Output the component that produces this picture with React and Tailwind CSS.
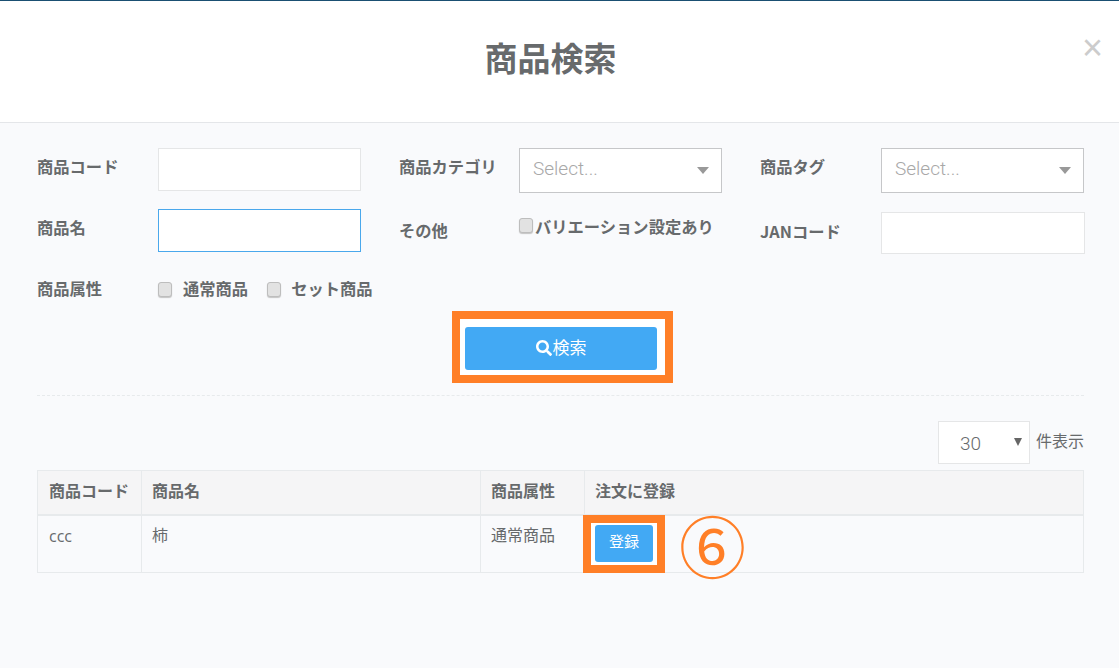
import { FaSearch } from "react-icons/fa";

const labelClass = "w-[121px] shrink-0 text-[16.3px] font-bold leading-[22px] text-[#676a6c] whitespace-nowrap";
const inputClass = "block w-[203px] h-[43px] border border-[#e5e6e7] bg-white outline-none";

const Check = () => (
  <input
    type="checkbox"
    className="block appearance-none w-[14px] h-[15px] rounded-[3px] border border-[#bdbdbd] bg-[#e2e2e2] shadow-[0_1px_1px_#c4c4c4]"
  />
);

const FakeSelect = () => (
  <div className="flex items-center justify-between w-[203px] h-[45px] border border-[#c6c7c9] bg-white pl-[13px] pr-[12px]">
    <span className="pb-[3px] font-['Roboto',sans-serif] text-[19px] font-light text-[#a8a8a8]">Select...</span>
    <svg width="12" height="7" viewBox="0 0 12 7">
      <path d="M0 0H12L6 7Z" fill="#999999" />
    </svg>
  </div>
);

const App = () => {
  const headers = ["商品コード", "商品名", "商品属性", "注文に登録"];

  return (
    <div className="w-[1119px] h-[668px] overflow-hidden bg-[#f9fafc] font-['Open_Sans','Noto_Sans_CJK_JP',sans-serif] text-[#676a6c]">
      <header className="relative h-[123px] border-t border-b border-t-[#1a4f72] border-b-[#e4e6e9] bg-white">
        <h1 className="pt-[34px] pr-[18px] text-center text-[33px] leading-[48px] font-bold text-[#676a6c]">商品検索</h1>
        <button className="absolute top-[23px] right-[16px] font-['Liberation_Sans',sans-serif] text-[36px] leading-[48px] text-[#cccccc]">×</button>
      </header>

      <main className="pl-[37px] pr-[35px] pt-[25px]">
        <div className="flex h-[163px]">
          <div className="w-[362px] shrink-0">
            <div className="flex h-[61px]">
              <span className={`${labelClass} pt-[8px]`}>商品コード</span>
              <input className={inputClass} />
            </div>
            <div className="flex h-[61px]">
              <span className={`${labelClass} pt-[8px]`}>商品名</span>
              <input className={`${inputClass} border-[#4aa8ec]!`} />
            </div>
            <div className="flex items-center h-[38px]">
              <span className={labelClass}>商品属性</span>
              <label className="flex items-center text-[16.3px] font-bold">
                <Check />
                <span className="ml-[11px]">通常商品</span>
              </label>
              <label className="flex items-center text-[16.3px] font-bold ml-[19px] whitespace-nowrap">
                <Check />
                <span className="ml-[10px]">セット商品</span>
              </label>
            </div>
          </div>

          <div className="w-[361px] shrink-0">
            <div className="flex h-[64px]">
              <span className={`${labelClass} w-[120px]! pt-[8px]`}>商品カテゴリ</span>
              <FakeSelect />
            </div>
            <div className="flex">
              <span className={`${labelClass} w-[120px]! pt-[8px]`}>その他</span>
              <label className="flex items-start text-[16.3px] font-bold leading-[22px] whitespace-nowrap pt-[4px]">
                <span className="pt-[2px] mr-[2px]"><Check /></span>
                バリエーション設定あり
              </label>
            </div>
          </div>

          <div className="shrink-0">
            <div className="flex h-[64px]">
              <span className={`${labelClass} pt-[8px]`}>商品タグ</span>
              <FakeSelect />
            </div>
            <div className="flex">
              <span className={`${labelClass} pt-[8px] font-['Noto_Sans_CJK_JP',sans-serif]`}>JANコード</span>
              <input className={`${inputClass} w-[204px]! h-[42px]!`} />
            </div>
          </div>
        </div>

        <div className="ml-[415px] w-[221px] h-[72px] border-8 border-[#ff7f27] bg-white px-[5px] py-[8px]">
          <button className="flex items-center justify-center w-[192px] h-[43px] pb-[2px] rounded-[3px] bg-[#42a9f4] text-[17px] text-white">
            <FaSearch className="w-[16px] h-[16px] mr-[1px]" />
            検索
          </button>
        </div>

        <div className="mt-[12px] border-t border-dashed border-[#e7eaec]" />

        <div className="flex justify-end items-start mt-[25px]">
          <div className="relative">
            <select defaultValue="30" className="block appearance-none w-[92px] h-[43px] border border-[#e5e6e7] bg-white pl-[21px] pt-[4px] font-['Roboto',sans-serif] text-[19px] font-light text-[#676a6c] outline-none">
              <option>30</option>
            </select>
            <svg className="absolute left-[76px] top-[17px]" width="8" height="8" viewBox="0 0 8 8">
              <path d="M0 0H8L4 8Z" fill="#666666" />
            </svg>
          </div>
          <span className="ml-[6px] mt-[8px] text-base leading-[24px]">件表示</span>
        </div>

        <table className="mt-[6px] w-[1047px] table-fixed border-collapse text-base text-[#676a6c]">
          <thead>
            <tr className="h-[44px] bg-[#f5f5f6]">
              {headers.map((h, i) => (
                <th
                  key={h}
                  className={`border border-[#e7eaec] border-b-2 pb-[3px] text-left font-bold ${i === 0 ? "w-[104px] px-[11px]" : i === 1 ? "w-[339px] px-[10px]" : i === 2 ? "w-[104px] px-[10px]" : "px-[10px]"}`}
                >
                  {h}
                </th>
              ))}
            </tr>
          </thead>
          <tbody>
            <tr className="h-[58px]">
              <td className="border border-[#e7eaec] px-[11px] pt-[8px] align-top leading-[24px]">ccc</td>
              <td className="border border-[#e7eaec] px-[10px] pt-[7px] align-top leading-[24px]">柿</td>
              <td className="border border-[#e7eaec] px-[10px] pt-[7px] align-top leading-[24px]">通常商品</td>
              <td className="relative border border-[#e7eaec]">
                <div className="absolute left-[-2px] top-[-1px] flex items-center justify-center w-[82px] h-[58px] border-8 border-[#ff7f27] bg-white">
                  <button className="w-[58px] h-[37px] pb-[4px] rounded-[3px] bg-[#42a9f4] text-[15px] text-white">登録</button>
                </div>
                <span className="absolute left-[94px] top-[-17px] text-[#ff7f27] text-[67px] leading-[90px] font-['Noto_Sans_CJK_JP',sans-serif]">⑥</span>
              </td>
            </tr>
          </tbody>
        </table>
      </main>
    </div>
  );
};

export default App;
